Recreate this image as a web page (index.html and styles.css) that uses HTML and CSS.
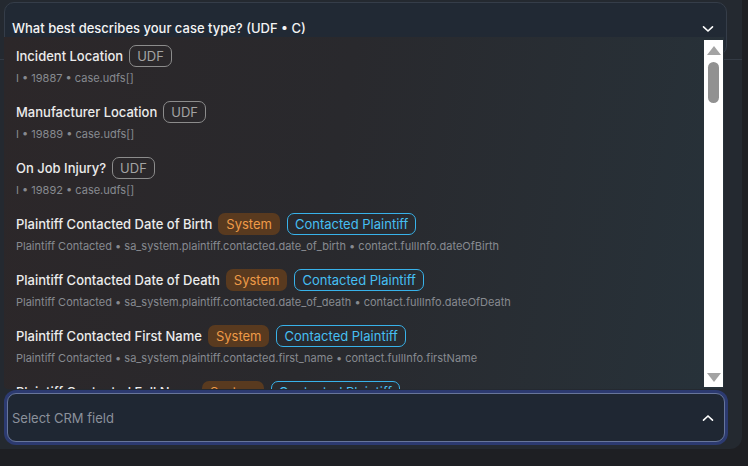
FILE: index.html
```html
<!DOCTYPE html>
<html lang="en">
<head>
    <meta charset="UTF-8">
    <meta name="viewport" content="width=device-width, initial-scale=1.0">
    <title>Field Mapping</title>
    <link rel="stylesheet" href="styles.css">
</head>
<body>
<div class="panel">
    <div class="panel-head">
        <!-- Question select -->
        <div class="select question">
            <span class="select-text">What best describes your case type? (UDF &bull; C)</span>
            <svg class="chevron" width="12" height="8" viewBox="0 0 12 8"><path d="M1.5 1.8 L6 6 L10.5 1.8" fill="none" stroke="#ffffff" stroke-width="1.6" stroke-linecap="round"/></svg>
        </div>
    </div>

    <div class="panel-body"></div>

    <!-- CRM field select -->
    <div class="select crm">
        <span class="placeholder">Select CRM field</span>
        <svg class="chevron" width="12" height="8" viewBox="0 0 12 8"><path d="M1.5 6.2 L6 2 L10.5 6.2" fill="none" stroke="#ffffff" stroke-width="1.6" stroke-linecap="round"/></svg>
    </div>

    <!-- Dropdown menu, opened upward -->
    <div class="menu">
        <ul class="menu-list">
            <li class="option">
                <div class="option-title">Incident Location <span class="badge udf">UDF</span></div>
                <div class="option-path">I &bull; 19887 &bull; case.udfs[]</div>
            </li>
            <li class="option">
                <div class="option-title">Manufacturer Location <span class="badge udf">UDF</span></div>
                <div class="option-path">I &bull; 19889 &bull; case.udfs[]</div>
            </li>
            <li class="option">
                <div class="option-title">On Job Injury? <span class="badge udf">UDF</span></div>
                <div class="option-path">I &bull; 19892 &bull; case.udfs[]</div>
            </li>
            <li class="option">
                <div class="option-title">Plaintiff Contacted Date of Birth <span class="badge system">System</span><span class="badge contact">Contacted Plaintiff</span></div>
                <div class="option-path">Plaintiff Contacted &bull; sa_system.plaintiff.contacted.date_of_birth &bull; contact.fullInfo.dateOfBirth</div>
            </li>
            <li class="option">
                <div class="option-title">Plaintiff Contacted Date of Death <span class="badge system">System</span><span class="badge contact">Contacted Plaintiff</span></div>
                <div class="option-path">Plaintiff Contacted &bull; sa_system.plaintiff.contacted.date_of_death &bull; contact.fullInfo.dateOfDeath</div>
            </li>
            <li class="option">
                <div class="option-title">Plaintiff Contacted First Name <span class="badge system">System</span><span class="badge contact">Contacted Plaintiff</span></div>
                <div class="option-path">Plaintiff Contacted &bull; sa_system.plaintiff.contacted.first_name &bull; contact.fullInfo.firstName</div>
            </li>
            <li class="option">
                <div class="option-title">Plaintiff Contacted Full Name <span class="badge system">System</span><span class="badge contact">Contacted Plaintiff</span></div>
            </li>
        </ul>

        <!-- Scrollbar -->
        <div class="scrollbar">
            <span class="arrow up"></span>
            <span class="thumb"></span>
            <span class="track-fill"></span>
            <span class="arrow down"></span>
        </div>
    </div>
</div>
</body>
</html>
```

FILE: styles.css
```css
html, body {
    margin: 0;
    height: 100%;
    overflow: hidden;
}

body {
    background-color: #1e1f23;
    font-family: Inter, "Noto Sans", sans-serif;
    color: #ececec;
}

/* Outer panel */
.panel {
    position: relative;
    width: 742px;
    height: 449px;
    background-color: #242930;
    border-radius: 0 0 12px 0;
    display: flex;
    flex-direction: column;
    box-sizing: border-box;
    padding-left: 4px;
}

.panel-head {
    height: 60px;
    border-bottom: 1px solid #333a44;
    box-sizing: border-box;
    padding-top: 2px;
    margin-left: -4px;
    padding-left: 4px;
}

.panel-body {
    flex: 1;
}

/* Selects */
.select {
    display: flex;
    align-items: center;
    justify-content: space-between;
    box-sizing: border-box;
}

.question {
    width: 723px;
    height: 54px;
    background-color: #212934;
    border: 1px solid #353d49;
    border-radius: 10px;
    padding: 0 12px 0 7px;
    align-items: flex-start;
    padding-top: 17px;
}

.select-text {
    font-size: 13px;
    font-weight: 500;
    color: #f4f4f4;
}

.question .chevron {
    margin-top: 5px;
}

.crm {
    width: 718px;
    height: 49px;
    margin: 0 0 7px 3px;
    background-color: #1f2733;
    border: 1px solid #67759a;
    border-radius: 9px;
    box-shadow: 0 0 0 3px #2c3a70;
    padding: 0 10px 0 4px;
}

.placeholder {
    font-size: 13px;
    color: #8b919b;
}

/* Dropdown menu */
.menu {
    position: absolute;
    left: 4px;
    top: 37px;
    width: 720px;
    height: 352px;
    display: flex;
    background: linear-gradient(100deg, #2c2729 0%, #29292d 45%, #27323a 100%);
    border-radius: 0 0 4px 4px;
    overflow: hidden;
}

.menu-list {
    flex: 1;
    list-style: none;
    margin: 0;
    padding: 8px 0 0 12px;
}

.option {
    height: 56px;
    box-sizing: border-box;
}

.option-title {
    display: flex;
    align-items: center;
    gap: 6px;
    height: 22px;
    font-size: 13px;
    font-weight: 500;
    color: #ececec;
    white-space: nowrap;
}

.option-path {
    margin-top: 4px;
    font-size: 11px;
    line-height: 14px;
    color: #878a90;
    white-space: nowrap;
}

/* Badges */
.badge {
    display: inline-flex;
    align-items: center;
    height: 22px;
    box-sizing: border-box;
    padding: 0 7px;
    border-radius: 7px;
    font-size: 13px;
    font-weight: 400;
}

.badge.udf {
    border: 1px solid #8c8c8c;
    color: #a3a3a3;
}

.badge.system {
    background-color: #593a1f;
    color: #ee9a48;
    padding: 0 8px;
}

.badge.contact {
    border: 1px solid #38b2ea;
    color: #46bff2;
    margin-left: 1px;
}

/* Scrollbar */
.scrollbar {
    width: 19px;
    margin: 3px 1px 2px 0;
    background-color: #ffffff;
    display: flex;
    flex-direction: column;
    align-items: center;
}

.arrow {
    width: 0;
    height: 0;
    border-left: 7px solid transparent;
    border-right: 7px solid transparent;
}

.arrow.up {
    margin-top: 6px;
    border-bottom: 9px solid #a3a3a3;
}

.arrow.down {
    margin-bottom: 5px;
    border-top: 9px solid #a3a3a3;
}

.thumb {
    width: 11px;
    height: 41px;
    margin-top: 7px;
    border-radius: 6px;
    background-color: #919191;
}

.track-fill {
    flex: 1;
}
```
